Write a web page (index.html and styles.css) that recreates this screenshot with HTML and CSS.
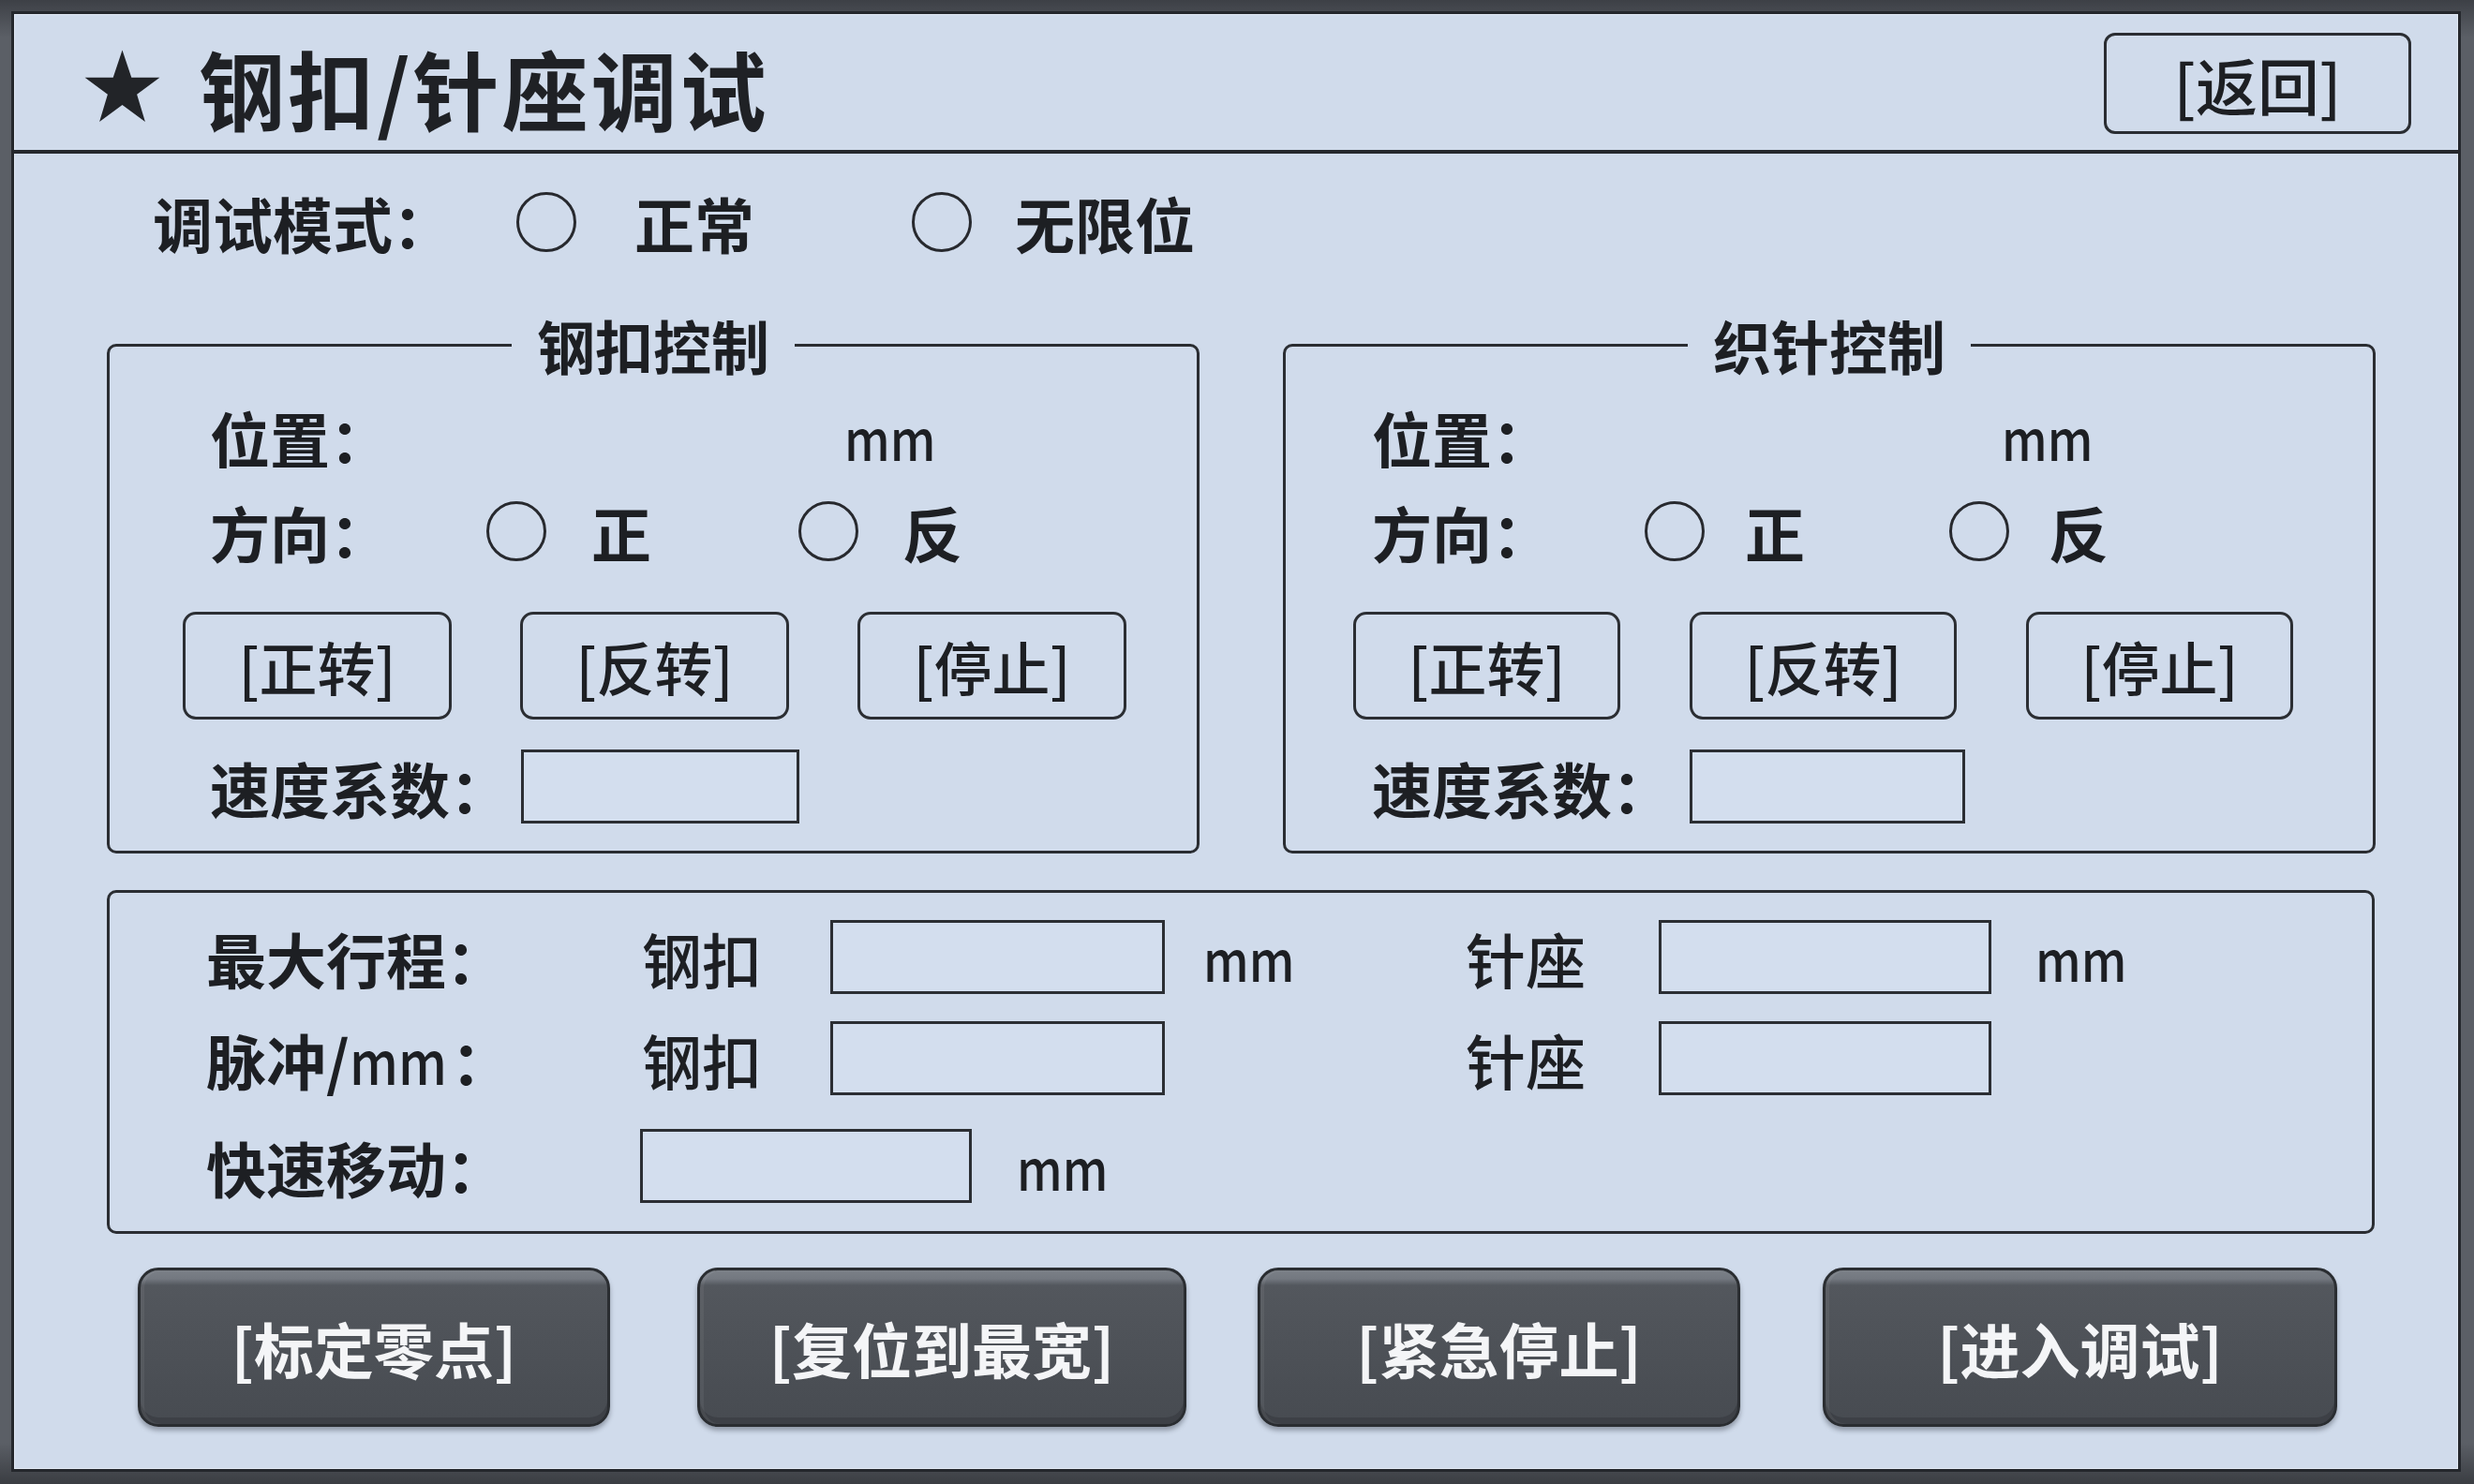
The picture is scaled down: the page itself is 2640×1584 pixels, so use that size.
FILE: index.html
```html
<!DOCTYPE html>
<html lang="zh-CN">
<head>
<meta charset="utf-8">
<title>钢扣/针座调试</title>
<link rel="stylesheet" href="styles.css">
</head>
<body>
<div class="panel">
  <header class="header">
    <div class="title">
      <svg class="star" viewBox="0 0 100 95" aria-hidden="true"><polygon points="50,0 61.8,35.1 98.1,35.1 68.8,56.7 79.4,92 50,70.5 20.6,92 31.2,56.7 1.9,35.1 38.2,35.1"/></svg>
      <h1>钢扣/针座调试</h1>
    </div>
    <button class="btn-back">[返回]</button>
  </header>

  <div class="mode-row">
    <span class="label mode-label">调试模式：</span>
    <span class="radio"></span>
    <span class="opt mode-opt1">正常</span>
    <span class="radio mode-r2"></span>
    <span class="opt mode-opt2">无限位</span>
  </div>

  <div class="groups">
    <fieldset class="group">
      <legend>钢扣控制</legend>
      <div class="row row-pos">
        <span class="label cell-pos">位置：</span>
        <span class="unit">mm</span>
      </div>
      <div class="row row-dir">
        <span class="label cell-dir">方向：</span>
        <span class="radio"></span>
        <span class="opt dir-a">正</span>
        <span class="radio dir-r2"></span>
        <span class="opt dir-b">反</span>
      </div>
      <div class="row-btns">
        <button class="btn">[正转]</button>
        <button class="btn">[反转]</button>
        <button class="btn">[停止]</button>
      </div>
      <div class="row row-speed">
        <span class="label cell-speed">速度系数：</span>
        <span class="input speed-input"></span>
      </div>
    </fieldset>

    <fieldset class="group group-right">
      <legend>织针控制</legend>
      <div class="row row-pos">
        <span class="label cell-pos">位置：</span>
        <span class="unit">mm</span>
      </div>
      <div class="row row-dir">
        <span class="label cell-dir">方向：</span>
        <span class="radio"></span>
        <span class="opt dir-a">正</span>
        <span class="radio dir-r2"></span>
        <span class="opt dir-b">反</span>
      </div>
      <div class="row-btns">
        <button class="btn">[正转]</button>
        <button class="btn">[反转]</button>
        <button class="btn">[停止]</button>
      </div>
      <div class="row row-speed">
        <span class="label cell-speed">速度系数：</span>
        <span class="input speed-input"></span>
      </div>
    </fieldset>
  </div>

  <div class="limits">
    <div class="lrow">
      <span class="label l-label">最大行程：</span>
      <span class="l-name">钢扣</span>
      <span class="input l-input"></span>
      <span class="unit l-unit">mm</span>
      <span class="l-name l-name2">针座</span>
      <span class="input l-input2"></span>
      <span class="unit l-unit2">mm</span>
    </div>
    <div class="lrow">
      <span class="label l-label">脉冲/<span class="narrow">mm</span>：</span>
      <span class="l-name">钢扣</span>
      <span class="input l-input"></span>
      <span class="unit l-unit"></span>
      <span class="l-name l-name2">针座</span>
      <span class="input l-input2"></span>
    </div>
    <div class="lrow lrow-3">
      <span class="label l-label3">快速移动：</span>
      <span class="input l-input3"></span>
      <span class="unit l-unit3">mm</span>
    </div>
  </div>

  <div class="actions">
    <button class="act act-1">[标定零点]</button>
    <button class="act act-2">[复位到最宽]</button>
    <button class="act act-3">[紧急停止]</button>
    <button class="act act-4">[进入调试]</button>
  </div>
</div>
</body>
</html>
```

FILE: styles.css
```css
* { box-sizing: border-box; }

html, body { margin: 0; }

body {
  width: 2640px;
  height: 1584px;
  padding: 12px 14px 13px 12px;
  background: linear-gradient(#3d4046, #5b5f66 40px, #5b5f66 1540px, #3a3d42);
  font-family: "Noto Sans CJK SC", "Noto Sans", sans-serif;
  color: #1d1f23;
  overflow: hidden;
}

.panel {
  height: 1559px;
  background: #d0dbeb;
  border: 3px solid #24272c;
  display: flex;
  flex-direction: column;
  box-shadow: inset 0 0 0 1px #e2e9f4;
}

/* header */
.header {
  height: 149px;
  flex: none;
  border-bottom: 4px solid #25282d;
  display: flex;
  align-items: center;
  justify-content: space-between;
  padding: 0 50px 0 74px;
}

.title {
  display: flex;
  align-items: center;
  gap: 40px;
  margin-top: 10px;
}

.star {
  width: 83px;
  height: 80px;
  fill: #222428;
}

.title h1 {
  margin: 0;
  font-size: 92px;
  font-weight: 700;
  line-height: 92px;
  letter-spacing: 3px;
  color: #1f2125;
}

.btn-back {
  width: 328px;
  height: 108px;
  margin-top: 3px;
  padding: 0;
  border: 3px solid #2a2d32;
  border-radius: 12px;
  background: transparent;
  font-family: inherit;
  font-size: 66px;
  font-weight: 500;
  color: #1d1f23;
}

/* common */
.label {
  font-size: 64px;
  font-weight: 700;
  line-height: 70px;
  white-space: nowrap;
}

.narrow {
  display: inline-block;
  transform: scaleX(0.86);
  transform-origin: left center;
  margin-right: -12px;
  font-weight: 500;
}

.opt {
  font-size: 64px;
  font-weight: 700;
  line-height: 70px;
}

.unit {
  display: inline-block;
  font-size: 60px;
  font-weight: 500;
  line-height: 70px;
  transform: scaleX(0.86);
  transform-origin: left center;
}

.radio {
  flex: none;
  width: 64px;
  height: 64px;
  border: 3px solid #27292e;
  border-radius: 50%;
}

.input {
  flex: none;
  display: block;
  height: 79px;
  border: 3px solid #2b2e33;
  background: #d3deee;
}

/* mode row */
.mode-row {
  display: flex;
  align-items: center;
  height: 70px;
  margin-top: 38px;
  padding-left: 148px;
}

.mode-label { width: 388px; }
.mode-opt1 { margin-left: 62px; width: 128px; }
.mode-r2 { margin-left: 168px; }
.mode-opt2 { margin-left: 46px; }

/* control groups */
.groups {
  display: flex;
  gap: 89px;
  margin-top: 64px;
  padding-left: 99px;
}

.group {
  width: 1166px;
  margin: 0;
  padding: 0 0 29px 0;
  min-width: 0;
  border: 3px solid #2a2d32;
  border-radius: 10px;
}

.group legend {
  margin: 0 auto;
  padding: 0 27px;
  font-size: 62px;
  font-weight: 700;
  line-height: 64px;
}

.row {
  display: flex;
  align-items: center;
  padding-left: 107px;
}

.row-pos { margin-top: 31px; height: 70px; }
.row-dir { margin-top: 31px; height: 70px; }
.row-speed { margin-top: 32px; height: 79px; }

.cell-pos { width: 677px; }
.cell-dir { width: 295px; }
.dir-a { margin-left: 48px; width: 64px; }
.dir-r2 { margin-left: 157px; }
.dir-b { margin-left: 47px; }
.cell-speed { width: 332px; }
.speed-input { width: 297px; }

.row-btns {
  display: flex;
  gap: 73px;
  margin-top: 51px;
  padding-left: 78px;
}

.btn {
  width: 287px;
  height: 115px;
  padding: 0;
  border: 3px solid #2b2e33;
  border-radius: 14px;
  background: transparent;
  font-family: inherit;
  font-size: 62px;
  font-weight: 500;
  color: #1d1f23;
}

.group-right .row { padding-left: 92px; }
.group-right .cell-pos { width: 672px; }
.group-right .cell-dir { width: 291px; }
.group-right .dir-a { margin-left: 43px; }
.group-right .dir-r2 { margin-left: 154px; }
.group-right .dir-b { margin-left: 42px; }
.group-right .cell-speed { width: 339px; }
.group-right .speed-input { width: 294px; }
.group-right .row-btns { padding-left: 72px; gap: 74px; }
.group-right .btn { width: 285px; }

/* limits box */
.limits {
  width: 2420px;
  margin: 39px 0 0 99px;
  padding: 29px 0 30px 103px;
  border: 3px solid #2a2d32;
  border-radius: 10px;
}

.lrow {
  display: flex;
  align-items: center;
  height: 79px;
}

.lrow + .lrow { margin-top: 29px; }
.lrow.lrow-3 { margin-top: 36px; }

.l-label { width: 465px; }
.l-name {
  width: 201px;
  font-size: 64px;
  font-weight: 500;
  line-height: 70px;
}
.l-input { width: 357px; }
.l-unit { margin-left: 41px; width: 280px; }
.l-name2 { width: 206px; }
.l-input2 { width: 355px; }
.l-unit2 { margin-left: 47px; }
.l-label3 { width: 463px; }
.l-input3 { width: 354px; }
.l-unit3 { margin-left: 48px; }

/* action buttons */
.actions {
  display: flex;
  margin-top: 36px;
  padding-left: 132px;
}

.act {
  height: 170px;
  padding: 0;
  border: 3px solid #2a2d31;
  border-radius: 22px;
  background: linear-gradient(#7b8087 0, #737880 9px, #53575d 16px, #4c5056 60%, #474b51 100%);
  box-shadow: inset 4px 0 0 rgba(255,255,255,0.06), inset 0 -7px 0 #3d4046, 0 4px 5px rgba(30,35,45,0.35);
  font-family: inherit;
  font-size: 64px;
  font-weight: 700;
  color: #f4f5f7;
}

.act-1 { width: 504px; }
.act-2 { width: 522px; margin-left: 93px; }
.act-3 { width: 515px; margin-left: 76px; }
.act-4 { width: 549px; margin-left: 88px; }
```
